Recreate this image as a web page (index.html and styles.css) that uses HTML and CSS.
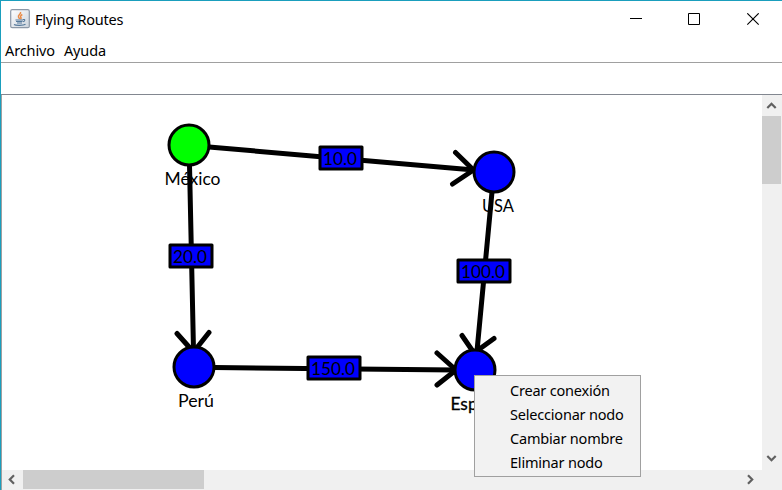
FILE: index.html
```
<!DOCTYPE html>
<html lang="es">
<head>
<meta charset="utf-8">
<title>Flying Routes</title>
<link rel="stylesheet" href="styles.css">
</head>
<body>
<div class="window">
  <header class="titlebar">
    <svg class="app-icon" width="20" height="20" viewBox="0 0 20 20">
      <defs><linearGradient id="tile" x1="0" y1="0" x2="1" y2="1"><stop offset="0" stop-color="#fff"/><stop offset="1" stop-color="#cbd3dc"/></linearGradient></defs>
      <rect x=".7" y=".7" width="18.6" height="18" rx="1.5" fill="url(#tile)" stroke="#8c98a7" stroke-width="1.2"/>
      <path d="M10.500 3c1 2-3 3-2 5 .3.8 1 1.200 1 2M12.300 5.500c-2.500 1.500-2 2-1.300 3.200.3.600 0 1-.5 1.500" fill="none" stroke="#e98a45" stroke-width="1.500"/>
      <path d="M5.500 11h7.500M6 12.500h6.500M7 14h5M13 10.500c2.500-.5 2.300 1.800 0 2.300M4 15.500c1.500 1.200 9.500 1.200 11.500-.2" fill="none" stroke="#55799b" stroke-width="1.100"/>
    </svg>
    <span class="title">Flying Routes</span>
    <svg class="controls" width="132" height="14" viewBox="0 0 132 14">
      <path d="M0 5.500h12M58.500 .500h11v11h-11z" fill="none" stroke="#000"/>
      <path d="M117.300 .300l11.400 11.400M128.700 .300l-11.400 11.400" fill="none" stroke="#000" stroke-width="1.100"/>
    </svg>
  </header>
  <nav class="menubar"><span>Archivo</span><span>Ayuda</span></nav>
  <div class="toolbar"></div>
  <main class="viewport">
    <svg class="graph" width="760" height="375" viewBox="2 95 760 375">
      <g class="edges">
        <path d="M209 147L474 170M189.500 165L193.500 350M492 192L477 351M214 367.500L456 370"/>
        <path d="M455.500 152.500L473.500 170L452.500 184M177 333.500L193.500 352L209 332.500M462 335.500L474 353L494 338.500M437 353L456 370L437 385"/>
      </g>
      <g class="nodes">
        <circle class="selected" cx="189" cy="145" r="20"/>
        <circle cx="494" cy="172" r="20"/>
        <circle cx="194" cy="367" r="20"/>
        <circle cx="475" cy="370" r="20"/>
        <rect x="320" y="147" width="42" height="22"/>
        <rect x="170" y="245" width="42" height="22"/>
        <rect x="458" y="260" width="52" height="22"/>
        <rect x="308" y="357" width="52" height="22"/>
      </g>
      <g class="labels">
        <text x="164.500" y="185" textLength="56" lengthAdjust="spacingAndGlyphs">México</text>
        <text x="482" y="212" textLength="32" lengthAdjust="spacingAndGlyphs">USA</text>
        <text x="178" y="407" textLength="36" lengthAdjust="spacingAndGlyphs">Perú</text>
        <text class="strong" x="450.500" y="410" textLength="54" lengthAdjust="spacingAndGlyphs">España</text>
        <text x="323" y="165" textLength="34" lengthAdjust="spacingAndGlyphs">10.0</text>
        <text x="173" y="263" textLength="34" lengthAdjust="spacingAndGlyphs">20.0</text>
        <text x="461" y="278" textLength="44" lengthAdjust="spacingAndGlyphs">100.0</text>
        <text x="311" y="375" textLength="44" lengthAdjust="spacingAndGlyphs">150.0</text>
      </g>
    </svg>
    <div class="vscroll">
      <svg width="20" height="21" viewBox="0 0 20 21"><path d="M5.300 13L9.500 8.800L13.700 13"/></svg>
      <div class="vthumb"></div>
      <svg class="end" width="20" height="21" viewBox="0 0 20 21"><path d="M5.300 7L9.500 11.200L13.700 7"/></svg>
    </div>
    <div class="hscroll">
      <svg width="21" height="20" viewBox="0 0 21 20"><path d="M12 5.300L7.800 9.500L12 13.700"/></svg>
      <div class="hthumb"></div>
      <svg class="end" width="21" height="20" viewBox="0 0 21 20"><path d="M7 5.300L11.200 9.500L7 13.700"/></svg>
    </div>
    <div class="corner"></div>
  </main>
  <ul class="popup">
    <li>Crear conexión</li>
    <li>Seleccionar nodo</li>
    <li>Cambiar nombre</li>
    <li>Eliminar nodo</li>
  </ul>
</div>
</body>
</html>
```
FILE: styles.css
```
* { box-sizing: border-box; }
body { margin: 0; overflow: hidden; background: #fff; }
.window {
  position: relative;
  width: 782px;
  height: 490px;
  display: flex;
  flex-direction: column;
  border-top: 1px solid #1a9ebd;
  border-left: 1px solid #1a9ebd;
  font: 14.5px/20px "Noto Sans", sans-serif;
  color: #000;
}
.titlebar { height: 37px; display: flex; align-items: center; padding: 0 20px 0 9px; }
.app-icon { margin-top: -1px; }
.title { margin: -2px 0 0 5px; letter-spacing: -.22px; }
.controls { margin: 1px 0 0 auto; }
.menubar { height: 25px; display: flex; align-items: center; gap: 9px; padding-left: 4px; border-bottom: 1px solid #a0a0a0; letter-spacing: -.12px; }
.toolbar { height: 32px; border-bottom: 1px solid #828790; }
.viewport {
  flex: 1;
  display: grid;
  grid-template-columns: 760px 20px;
  grid-template-rows: 375px 20px;
  border-left: 1px solid #a0a0a0;
}
.graph { display: block; }
.edges { fill: none; stroke: #000; stroke-width: 5; stroke-linecap: round; stroke-linejoin: round; }
.nodes { fill: #00f; stroke: #000; stroke-width: 3; stroke-linejoin: round; }
.selected { fill: #0f0; }
.labels { font-family: Lato, sans-serif; font-size: 16.5px; }
.strong { stroke: #000; stroke-width: .3px; }
.vscroll, .hscroll { display: flex; background: #f0f0f0; }
.vscroll { flex-direction: column; }
.vscroll path, .hscroll path { fill: none; stroke: #606060; stroke-width: 2.2; }
.vthumb { width: 19px; height: 68px; background: #cdcdcd; }
.hthumb { width: 181px; height: 19px; background: #cdcdcd; }
.vscroll .end { margin-top: auto; }
.hscroll .end { margin-left: auto; }
.corner { background: #f0f0f0; }
.popup {
  position: absolute;
  left: 473px;
  top: 374px;
  width: 167px;
  height: 102px;
  margin: 0;
  padding: 2px 0 0 35px;
  list-style: none;
  background: #f2f2f2;
  border: 1px solid #a0a0a0;
  letter-spacing: -.2px;
}
.popup li { height: 24px; line-height: 24px; white-space: nowrap; }
```
